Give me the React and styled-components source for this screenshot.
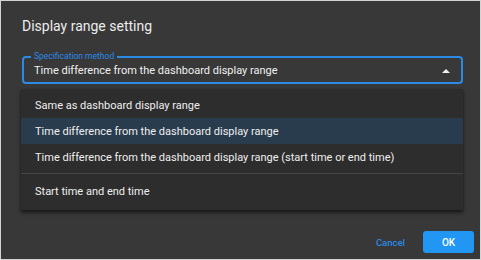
import styled, { createGlobalStyle } from "styled-components";

const Global = createGlobalStyle`
  html, body { margin: 0; padding: 0; background: #383838; }
  body { font-family: Roboto, "Liberation Sans", sans-serif; }
`;

const Dialog = styled.div`
  position: relative;
  box-sizing: border-box;
  width: 481px;
  height: 260px;
  border: 1px solid #d4d4d4;
  background: #383838;
  display: flex;
  flex-direction: column;
  padding: 16px 6px 6px 21px;
`;

const Title = styled.h2`
  margin: 0;
  font-size: 14px;
  font-weight: 400;
  line-height: 18px;
  color: #ececec;
`;

const Select = styled.div`
  position: relative;
  box-sizing: border-box;
  width: 441px;
  height: 28px;
  margin-top: 21px;
  border: 2px solid #2a8ae6;
  border-radius: 4px;
  display: flex;
  align-items: center;
  justify-content: space-between;
  padding: 0 10px 0 10px;
`;

const Legend = styled.span`
  position: absolute;
  top: -7px;
  left: 7px;
  padding: 0 3px;
  background: #383838;
  font-size: 8.5px;
  line-height: 11px;
  color: #2a8ae6;
`;

const Value = styled.span`
  font-size: 11px;
  color: #f0f0f0;
`;

const Arrow = styled.svg`
  width: 8px;
  height: 5px;
  margin-right: 1px;
`;

const Menu = styled.ul`
  position: absolute;
  left: 20px;
  top: 88px;
  width: 442px;
  margin: 0;
  padding: 3px 0 6px;
  list-style: none;
  background: #2d2d2d;
  box-shadow: 0 3px 4px rgba(0, 0, 0, 0.45), 0 1px 2px rgba(0, 0, 0, 0.3);
`;

const Item = styled.li`
  height: 26px;
  display: flex;
  align-items: center;
  padding-left: 14px;
  font-size: 11px;
  color: #efefef;
  background: ${(p) => (p.$selected ? "#293c4e" : "transparent")};
`;

const Divider = styled.li`
  height: 1px;
  margin: 3px 0 4px;
  background: #444;
`;

const Actions = styled.div`
  margin-top: auto;
  display: flex;
  justify-content: flex-end;
  align-items: center;
  gap: 18px;
`;

const TextButton = styled.button`
  border: 0;
  background: none;
  padding: 0;
  font-family: inherit;
  font-size: 9.5px;
  font-weight: 500;
  color: #2a8ae6;
`;

const OkButton = styled.button`
  width: 51px;
  height: 22px;
  border: 0;
  border-radius: 3px;
  background: #2196f3;
  font-family: inherit;
  font-size: 10px;
  font-weight: 500;
  color: #fff;
`;

const options = [
  "Same as dashboard display range",
  "Time difference from the dashboard display range",
  "Time difference from the dashboard display range (start time or end time)",
];

export default function App() {
  return (
    <>
      <Global />
      <Dialog>
        <Title>Display range setting</Title>
        <Select>
          <Legend>Specification method</Legend>
          <Value>Time difference from the dashboard display range</Value>
          <Arrow viewBox="0 0 8 5">
            <path d="M0 5 L4 1 L8 5 Z" fill="#f0f0f0" />
          </Arrow>
        </Select>
        <Menu>
          {options.map((o, i) => (
            <Item key={o} $selected={i === 1}>{o}</Item>
          ))}
          <Divider />
          <Item>Start time and end time</Item>
        </Menu>
        <Actions>
          <TextButton>Cancel</TextButton>
          <OkButton>OK</OkButton>
        </Actions>
      </Dialog>
    </>
  );
}
